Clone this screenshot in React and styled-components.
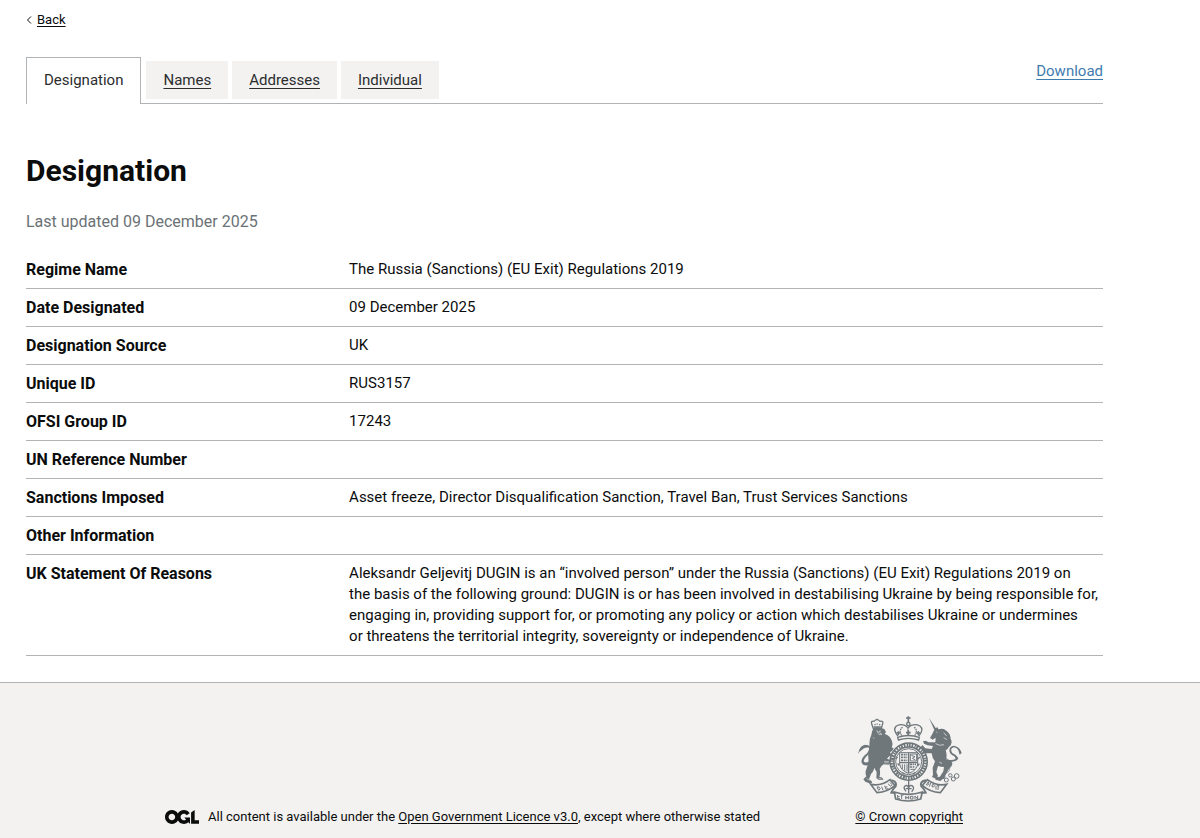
import React from "react";
import styled, { createGlobalStyle } from "styled-components";

const GlobalStyle = createGlobalStyle`
  * { box-sizing: border-box; }
  body {
    margin: 0;
    background: #fff;
    color: #0b0c0c;
    font-family: Roboto, "Liberation Sans", sans-serif;
    font-size: 16px;
    line-height: 21px;
  }
`;

const Page = styled.div`
  display: flex;
  flex-direction: column;
  min-height: 100vh;
  overflow-x: hidden;
`;

const Main = styled.main`
  padding: 8px 97px 26px 26px;
`;

const BackLink = styled.a`
  display: inline-flex;
  align-items: center;
  gap: 5px;
  color: #0b0c0c;
  font-size: 13px;
  line-height: 20px;
  text-underline-offset: 2px;
`;

const TabBar = styled.div`
  display: flex;
  justify-content: space-between;
  align-items: flex-start;
  margin-top: 27px;
  border-bottom: 1px solid #b1b4b6;
  font-size: 15px;
`;

const TabList = styled.nav`
  display: flex;
  align-items: flex-start;
  gap: 4px;
  margin-bottom: -1px;
`;

const Tab = styled.a`
  margin-top: ${(p) => (p.$active ? 0 : 4)}px;
  margin-right: ${(p) => (p.$active ? 1 : 0)}px;
  padding: ${(p) => (p.$active ? "12px 17px 13px" : "9px 17px 8px")};
  height: ${(p) => (p.$active ? 47 : 38)}px;
  border: ${(p) => (p.$active ? "1px solid #b1b4b6" : "0")};
  border-bottom: 0;
  background: ${(p) => (p.$active ? "#fff" : "#f3f2f1")};
  color: #2b2d2e;
  text-decoration: ${(p) => (p.$active ? "none" : "underline")};
  text-underline-offset: 3px;
`;

const DownloadLink = styled.a`
  margin-top: 4px;
  color: #3f7cae;
  text-underline-offset: 3px;
`;

const Heading = styled.h1`
  margin: 50px 0 0;
  font-size: 30px;
  line-height: 34px;
  font-weight: 700;
`;

const Updated = styled.p`
  margin: 23px 0 19px;
  color: #6b7276;
`;

const SummaryList = styled.dl`
  margin: 0;
`;

const SummaryRow = styled.div`
  display: flex;
  padding: 8px 0;
  border-bottom: 1px solid #b1b4b6;
`;

const Term = styled.dt`
  flex: 0 0 30%;
  font-weight: 700;
`;

const Value = styled.dd`
  flex: 1;
  margin: 0;
  font-size: 15px;
  white-space: pre-line;
`;

const Footer = styled.footer`
  flex: 1;
  border-top: 1px solid #b1b4b6;
  background: #f3f2f1;
  font-size: 13px;
  line-height: 20px;
`;

const FooterInner = styled.div`
  display: flex;
  justify-content: space-between;
  align-items: flex-end;
  max-width: 870px;
  margin: 0 auto;
  padding: 32px 72px 0 0;
`;

const Licence = styled.div`
  display: flex;
  align-items: center;
  gap: 9px;
`;

const FooterLink = styled.a`
  color: #0b0c0c;
  text-underline-offset: 2px;
`;

const CrownLink = styled(FooterLink)`
  display: flex;
  flex-direction: column;
  align-items: center;
  gap: 5px;
`;

const OglLogo = () => (
  <svg width="34" height="14" viewBox="0 0 483.2 195.7" fill="#0b0c0c" aria-hidden="true">
    <path d="M421.5 142.8V.1l-50.7 32.3v161.1h112.4v-50.7zm-122.3-9.6A47.12 47.12 0 0 1 221 97.8c0-26 21.1-47.1 47.1-47.1 16.7 0 31.4 8.7 39.7 21.8l42.7-27.2A97.63 97.63 0 0 0 268.1 0c-36.5 0-68.3 20.1-85.1 49.7A98 98 0 0 0 97.8 0C43.9 0 0 43.9 0 97.8s43.9 97.8 97.8 97.8c36.5 0 68.3-20.1 85.1-49.7a97.76 97.76 0 0 0 149.6 25.4l19.4 22.2h3v-87.8h-80l24.3 27.5zM97.8 145c-26 0-47.1-21.1-47.1-47.1s21.1-47.1 47.1-47.1 47.1 21.1 47.1 47.1S123.8 145 97.8 145" />
  </svg>
);

const Crest = () => (
  <svg width="105" height="87" viewBox="48 45 315 261" fill="#6f777b" stroke="none" aria-hidden="true">
    {/* lion with small crown */}
    <path d="M97 86 L92 71 Q89 62 99 64 Q108 54 117 64 Q128 62 125 71 L121 86 Q108 81 97 86Z" fill="none" stroke="#6f777b" strokeWidth="4" />
    <path d="M108 60v-4M100 74h4M107 72h3M114 74h4M98 81h22" stroke="#6f777b" strokeWidth="4" />
    <path d="M97 87 Q110 80 130 87 L135 96 L131 102 Q145 106 150 117 Q158 130 152 142 L158 145 Q155 153 147 157 L152 166 Q143 168 138 176 L149 180 Q151 188 143 194 L128 193 Q121 196 116 207 Q119 220 115 230 L124 233 L127 240 L112 239 L106 234 L107 216 Q102 209 101 203 Q96 216 90 222 L84 238 L92 244 Q95 248 89 251 L73 245 L67 238 L76 229 Q71 218 77 205 Q84 190 82 174 Q80 157 86 143 Q83 120 91 105 Q92 92 97 87Z" />
    <path d="M84 196 Q63 199 61 184 Q61 175 71 166 Q88 153 83 142 Q77 136 67 142 Q57 148 52 162 Q53 147 62 140 Q75 130 87 139 Q94 150 83 163 Q69 175 68 184 Q71 190 84 185Z" />
    <path d="M56 152 Q56 138 72 134 Q86 136 83 143 Q72 139 56 155Z" />
    <path d="M107 92l5 4 6-4-2 7 7 4-9 1zM96 112l4 5" fill="none" stroke="#f3f2f1" strokeWidth="1.5" />
    <path d="M129 184l15 1M130 188l13 1M77 236l9 5M112 235l10 2" stroke="#f3f2f1" strokeWidth="1.5" />

    {/* imperial crown */}
    <g fill="none" stroke="#6f777b" strokeWidth="4">
      <path d="M202 49v17M195 54h14" strokeWidth="5" />
      <circle cx="202" cy="72" r="5" />
      <path d="M171 109 Q154 88 166 78 Q187 68 201 83 Q216 68 237 78 Q250 88 233 109" />
      <path d="M182 107 Q172 91 185 81M221 107 Q232 91 219 81M201 82v24" strokeDasharray="4 2" />
      <path d="M170 112 Q202 101 235 112 L233 120 Q202 110 172 120Z" />
      <path d="M166 99h12M172 94v12M195 98h14M202 91v14M226 99h12M232 94v12" strokeWidth="5" />
    </g>

    {/* garter and quartered shield */}
    <circle cx="203" cy="185" r="50" fill="none" stroke="#6f777b" strokeWidth="16" />
    <circle cx="203" cy="185" r="50" fill="none" stroke="#f3f2f1" strokeWidth="7" strokeDasharray="3 5 4 4 2 6" />
    <circle cx="203" cy="185" r="39" fill="#f3f2f1" stroke="#6f777b" strokeWidth="3" />
    <path d="M176 158h54v34q-2 20-27 28q-25-8-27-28z" fill="none" stroke="#6f777b" strokeWidth="3" />
    <path d="M203 158v61M176 188h54" stroke="#6f777b" strokeWidth="4" />
    <path d="M180 164h19M180 172h19M180 181h19M206 193h19M206 201h17" stroke="#6f777b" strokeWidth="5" strokeDasharray="7 2 5 2" />
    <path d="M208 162h19v21h-19zM211 166l11 4-8 5 9 5M184 193v14M191 193v19M198 193v21M208 208h14" fill="none" stroke="#6f777b" strokeWidth="3" />
    <path d="M170 171l-7 5M170 190l5 7M236 171l-5 6M235 191l-5 7M184 218l7 4M222 218l-7 4" stroke="#6f777b" strokeWidth="4" />

    {/* unicorn */}
    <path d="M264 54 L286 87 L280 90Z" />
    <path d="M282 85 L290 82 L292 88 Q306 84 314 91 Q329 101 329 116 Q337 132 323 142 Q321 148 314 151 Q319 166 315 178 Q330 179 334 190 Q335 199 324 206 L315 223 L309 234 L298 243 L283 239 L285 232 L297 230 L307 214 L309 201 Q299 201 291 198 L286 216 L291 228 L284 236 L273 231 L276 224 L275 203 L282 184 Q273 174 272 160 L253 160 L245 151 L239 142 L244 135 L253 145 L272 147 L276 138 L260 136 L249 131 L246 124 L254 122 L263 127 L283 127 L284 113 L275 119 L267 114 L275 100Z" />
    <path d="M321 187 Q350 185 352 174 Q346 164 334 159 Q325 147 338 142 Q352 142 356 164 L362 159 Q357 145 350 142 Q337 132 327 143 Q321 156 334 166 Q345 171 343 177 Q336 182 319 179Z" />
    <path d="M286 96l3 2M308 98l9 10M308 113l10 6M284 131q12 8 25 3M295 187l8 3" fill="none" stroke="#f3f2f1" strokeWidth="2" />
    <g fill="none" stroke="#6f777b" strokeWidth="3">
      <path d="M316 174 Q336 207 317 220" strokeDasharray="4 2" />
      <circle cx="306" cy="230" r="6" /><circle cx="316" cy="240" r="6" />
      <circle cx="328" cy="226" r="5" /><circle cx="337" cy="237" r="6" />
      <circle cx="347" cy="228" r="7" />
    </g>

    {/* ribbon and motto */}
    <g fill="#f3f2f1" stroke="#6f777b" strokeWidth="5">
      <path d="M89 253 Q121 259 147 239 L162 256 Q140 276 108 278Z" />
      <path d="M317 253 Q285 259 259 239 L244 256 Q266 276 298 278Z" />
      <path d="M151 241 Q169 244 164 259 Q156 266 151 278 L165 279M255 241 Q235 244 241 259 Q249 266 254 278 L239 279" fill="none" strokeWidth="6" />
      <path d="M160 276 Q201 290 244 276 L239 297 Q202 309 164 297Z" />
      <path d="M203 243v37M195 274q-12-14 1-18 7 2 7 10 1-12 10-9 10 7-1 18M194 266h18" fill="none" strokeWidth="4" />
    </g>
    <path d="M108 261l5 10q9-4 1-10zM122 260l4 11M131 257l4 11 7-3M133 262l6-2M142 251q6 13 11 3l-6-7M262 245l-6 10q10 2 6-10M269 249l-4 11M274 261q-4-8 4-8 6 8-4 8M285 257v12M292 258l-1 12M288 257h8M170 285v11h7M170 290h6M182 285v12M179 285h9M194 298v-9l4 6 5-6v9M208 289h8v8h-8zM222 297v-9l8 9v-10" fill="none" stroke="#6f777b" strokeWidth="3" />
  </svg>
);

const tabs = ["Designation", "Names", "Addresses", "Individual"];

const rows = [
  ["Regime Name", "The Russia (Sanctions) (EU Exit) Regulations 2019"],
  ["Date Designated", "09 December 2025"],
  ["Designation Source", "UK"],
  ["Unique ID", "RUS3157"],
  ["OFSI Group ID", "17243"],
  ["UN Reference Number", ""],
  ["Sanctions Imposed", "Asset freeze, Director Disqualification Sanction, Travel Ban, Trust Services Sanctions"],
  ["Other Information", ""],
  [
    "UK Statement Of Reasons",
    `Aleksandr Geljevitj DUGIN is an “involved person” under the Russia (Sanctions) (EU Exit) Regulations 2019 on
    the basis of the following ground: DUGIN is or has been involved in destabilising Ukraine by being responsible for,
    engaging in, providing support for, or promoting any policy or action which destabilises Ukraine or undermines
    or threatens the territorial integrity, sovereignty or independence of Ukraine.`,
  ],
];

export default function App() {
  return (
    <Page>
      <GlobalStyle />
      <Main>
        <BackLink href="#back">
          <svg width="6" height="8" viewBox="0 0 6 8" fill="none" stroke="#0b0c0c" aria-hidden="true">
            <path d="M5 .5 1.5 4 5 7.5" />
          </svg>
          <span>Back</span>
        </BackLink>
        <TabBar>
          <TabList>
            {tabs.map((t, i) => (
              <Tab key={t} href={`#${t.toLowerCase()}`} $active={i === 0}>{t}</Tab>
            ))}
          </TabList>
          <DownloadLink href="#download">Download</DownloadLink>
        </TabBar>
        <Heading>Designation</Heading>
        <Updated>Last updated 09 December 2025</Updated>
        <SummaryList>
          {rows.map(([k, v]) => (
            <SummaryRow key={k}>
              <Term>{k}</Term>
              <Value>{v}</Value>
            </SummaryRow>
          ))}
        </SummaryList>
      </Main>
      <Footer>
        <FooterInner>
          <Licence>
            <OglLogo />
            <span>
              All content is available under the{" "}
              <FooterLink href="#licence">Open Government Licence v3.0</FooterLink>, except where otherwise stated
            </span>
          </Licence>
          <CrownLink href="#crown">
            <Crest />
            <span>© Crown copyright</span>
          </CrownLink>
        </FooterInner>
      </Footer>
    </Page>
  );
}
